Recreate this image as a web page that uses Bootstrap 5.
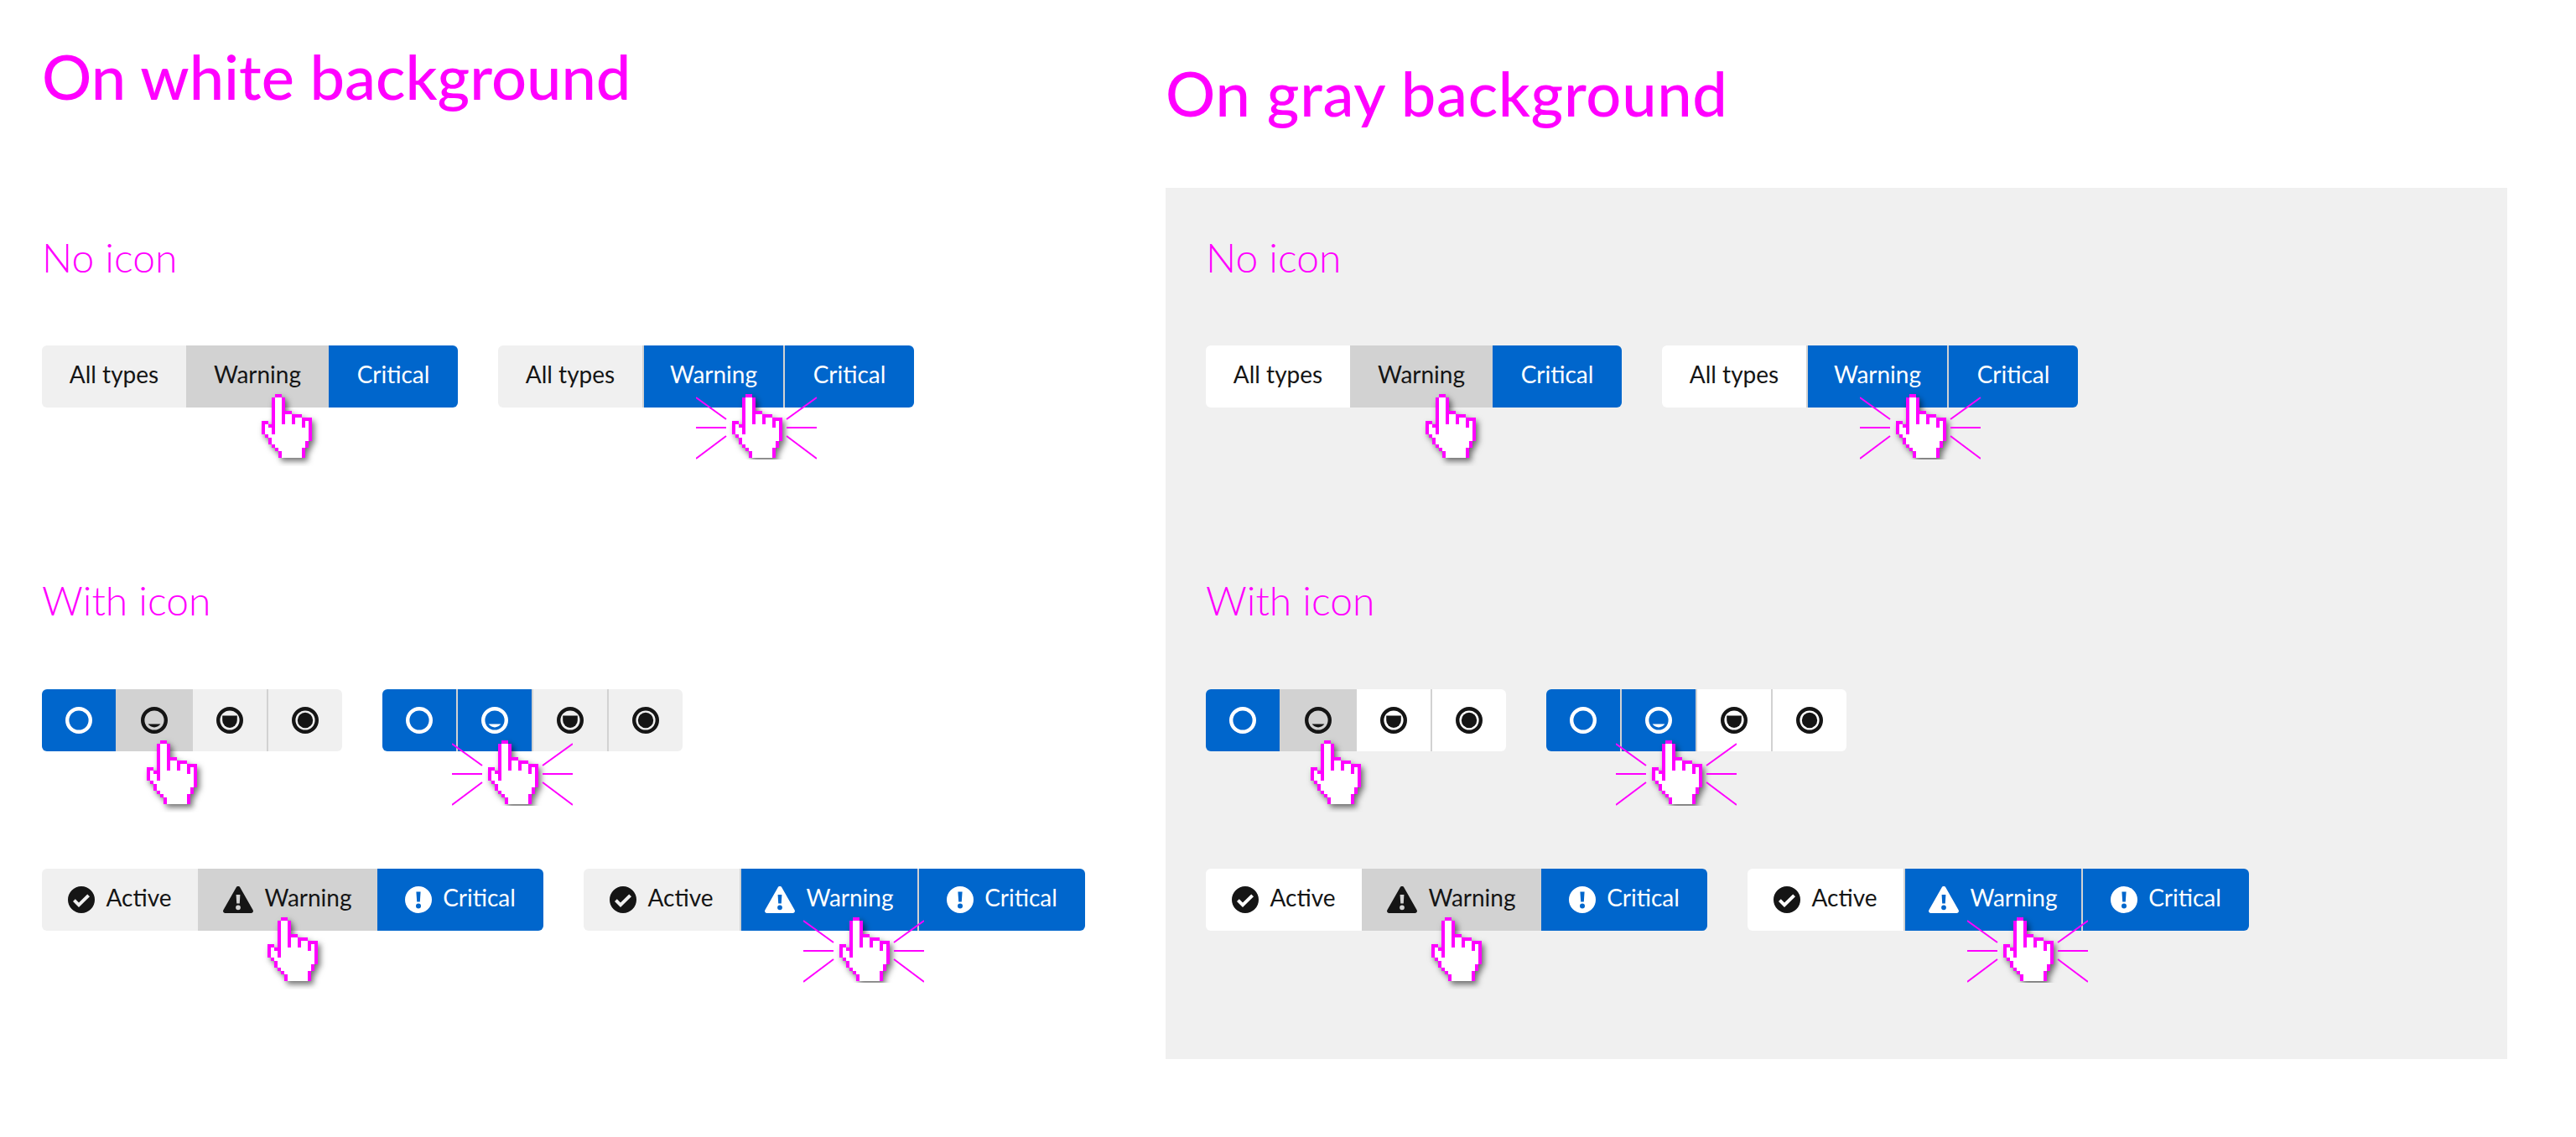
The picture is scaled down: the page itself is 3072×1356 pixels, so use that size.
<!DOCTYPE html>
<html lang="en">
<head>
<meta charset="utf-8">
<title>Toggle group states</title>
<link href="https://cdn.jsdelivr.net/npm/bootstrap@5.3.0/dist/css/bootstrap.min.css" rel="stylesheet">
<style>
html,body{background:#fff;}
body{font-family:"Lato","Liberation Sans",sans-serif;color:#151515;min-height:1356px;--seg-bg:#f0f0f0;}
.svg-defs{position:absolute;width:0;height:0;}
.col-left{width:1390px;padding-left:50px;}
.col-right{width:1600px;}
.head-left{height:224px;padding-top:48px;}
.head-right{height:224px;padding-top:68px;}
.big-title{font-size:74px;line-height:86px;font-weight:500;color:#f0f;margin:0;}
.head-right .big-title{letter-spacing:.7px;}
.pane{padding-top:54px;}
.pane-gray{background:#f0f0f0;height:1039px;padding-left:48px;--seg-bg:#fff;}
.sub-title{font-size:48px;line-height:58px;font-weight:300;color:#f0f;margin:0;}
.gap-a{margin-top:76px;}
.gap-b{margin-top:201px;}
.gap-c{margin-top:77px;}
.gap-d{margin-top:140px;}
.gap-48{gap:48px;}
.seg-wrap{position:relative;height:74px;}
.btn-group>.btn.seg.seg.seg{--bs-btn-border-radius:6px;height:74px;padding:0 0 6px;border:0;margin-left:0;flex:none;
  background:var(--seg-bg);color:#151515;font-size:28px;line-height:1;gap:13px;
  display:inline-flex;align-items:center;justify-content:center;}
.btn-group>.btn.seg.seg.seg svg{position:relative;top:3px;}
.btn-group>.btn.seg.seg.seg.is-hover{background:#d2d2d2;}
.btn-group>.btn.seg.seg.seg.is-on{background:#06c;color:#fff;}
.btn-group>.btn.seg.seg.seg.sep{border-left:2px solid #d2d2d2;}
.w-88{width:88px}.w-90{width:90px}.w-92{width:92px}
.w-154{width:154px}.w-156{width:156px}.w-168{width:168px}.w-170{width:170px}.w-172{width:172px}
.w-186{width:186px}.w-198{width:198px}.w-200{width:200px}.w-212{width:212px}.w-214{width:214px}
.ico-lvl{width:32px;height:32px;}
.ico-st{width:32px;height:32px;flex:none;}
.ico-tri{width:36px;height:32px;flex:none;}
.cursor{position:absolute;width:144px;pointer-events:none;z-index:3;}
.cursor-hover{height:90px;}
.cursor-click{height:82px;}
.cur-a{left:219px;top:54px}
.cur-b{left:236px;top:54px}
.cur-c{left:82px;top:57px}
.cur-d{left:83px;top:57px}
.cur-e{left:226px;top:54px}
.cur-f{left:262px;top:54px}
</style>
</head>
<body>
<svg class="svg-defs" aria-hidden="true">
  <defs>
    <filter id="handShade" x="-30%" y="-20%" width="170%" height="150%">
      <feDropShadow dx="3" dy="4" stdDeviation="3.5" flood-color="#000" flood-opacity=".55"/>
    </filter>
    <g id="handArt">
      <g filter="url(#handShade)">
        <polygon fill="#fff" points="16,0 24,0 24,4 28,4 28,20 36,20 36,24 48,24 48,28 60,28 60,56 56,56 56,64 52,64 52,76 20,76 20,68 16,68 16,64 12,64 12,60 8,60 8,52 4,52 4,48 0,48 0,32 8,32 8,36 12,36 12,4 16,4"/>
      </g>
      <path fill="#f0f" shape-rendering="crispEdges" d="M16 0h8v4h-8zM12 4h4v44h-4zM24 4h4v32h-4zM28 20h8v4h-8zM36 24h4v12h-4zM40 24h8v4h-8zM48 28h4v12h-4zM52 28h8v4h-8zM56 32h4v24h-4zM52 56h4v8h-4zM48 64h4v12h-4zM0 32h8v4H0zM0 36h4v12H0zM8 36h4v4H8zM4 48h4v4H4zM8 52h4v8H8zM12 60h4v4h-4zM16 64h4v4h-4zM20 68h4v8h-4z"/>
    </g>
    <symbol id="handHover" viewBox="-43 -4 144 90"><use href="#handArt"/></symbol>
    <symbol id="handClick" viewBox="-43 -4 144 82">
      <use href="#handArt"/>
      <path fill="none" stroke="#f0f" stroke-width="2" d="M-43 4L-7 30M-43 40H-7M-43 77L-7 50M101 4L65 30M101 40H65M101 77L65 50"/>
    </symbol>
    <symbol id="lvl0" viewBox="0 0 32 32"><circle cx="16" cy="16" r="13.8" fill="none" stroke="currentColor" stroke-width="4.4"/></symbol>
    <symbol id="lvl1" viewBox="0 0 32 32"><circle cx="16" cy="16" r="13.8" fill="none" stroke="currentColor" stroke-width="4.4"/><path fill="currentColor" d="M8.6 20.5H23.4A9 9 0 0 1 8.6 20.5Z"/></symbol>
    <symbol id="lvl2" viewBox="0 0 32 32"><circle cx="16" cy="16" r="13.8" fill="none" stroke="currentColor" stroke-width="4.4"/><path fill="currentColor" d="M7.2 10.5H24.8V16A8.8 9 0 0 1 7.2 16Z"/></symbol>
    <symbol id="lvl3" viewBox="0 0 32 32"><circle cx="16" cy="16" r="13.8" fill="none" stroke="currentColor" stroke-width="4.4"/><circle cx="16" cy="16" r="9.2" fill="currentColor"/></symbol>
    <symbol id="stCheck" viewBox="0 0 32 32"><path fill="currentColor" fill-rule="evenodd" d="M16 0A16 16 0 1 1 16 32A16 16 0 1 1 16 0ZM13 25L26 12.2L23.2 9.4L13 19.4L8.8 15.2L6 18Z"/></symbol>
    <symbol id="stExcl" viewBox="0 0 32 32"><path fill="currentColor" fill-rule="evenodd" d="M16 0A16 16 0 1 1 16 32A16 16 0 1 1 16 0ZM13.4 6.5L14.2 18.5H17.8L18.6 6.5ZM16 20.6A3 3 0 1 0 16 26.6A3 3 0 1 0 16 20.6Z"/></symbol>
    <symbol id="stWarn" viewBox="0 0 36 32"><path fill="currentColor" fill-rule="evenodd" d="M18 0C19 0 19.9 .5 20.4 1.4L35.6 28.2C36.6 30 35.4 32 33.4 32H2.6C.6 32 -.6 30 .4 28.2L15.6 1.4C16.1 .5 17 0 18 0ZM15.6 10L16.2 20.5H19.8L20.4 10ZM18 22.4A2.9 2.9 0 1 0 18 28.2A2.9 2.9 0 1 0 18 22.4Z"/></symbol>
  </defs>
</svg>

<main class="d-flex align-items-start">
  <section class="col-left">
    <div class="head-left"><h1 class="big-title">On white background</h1></div>
    <div class="pane">
      <h2 class="sub-title">No icon</h2>
      <div class="d-flex gap-48 gap-a">
        <div class="seg-wrap">
          <div class="btn-group" role="group">
            <button type="button" class="btn seg w-172">All types</button>
            <button type="button" class="btn seg w-170 is-hover">Warning</button>
            <button type="button" class="btn seg w-154 is-on">Critical</button>
          </div>
          <svg class="cursor cursor-hover cur-a"><use href="#handHover"/></svg>
        </div>
        <div class="seg-wrap">
          <div class="btn-group" role="group">
            <button type="button" class="btn seg w-172">All types</button>
            <button type="button" class="btn seg w-168 is-on sep">Warning</button>
            <button type="button" class="btn seg w-156 is-on sep">Critical</button>
          </div>
          <svg class="cursor cursor-click cur-b"><use href="#handClick"/></svg>
        </div>
      </div>
      <h2 class="sub-title gap-b">With icon</h2>
      <div class="d-flex gap-48 gap-c">
        <div class="seg-wrap">
          <div class="btn-group" role="group">
            <button type="button" class="btn seg w-88 is-on" aria-label="None"><svg class="ico-lvl"><use href="#lvl0"/></svg></button>
            <button type="button" class="btn seg w-92 is-hover" aria-label="Low"><svg class="ico-lvl"><use href="#lvl1"/></svg></button>
            <button type="button" class="btn seg w-88" aria-label="Medium"><svg class="ico-lvl"><use href="#lvl2"/></svg></button>
            <button type="button" class="btn seg w-90 sep" aria-label="High"><svg class="ico-lvl"><use href="#lvl3"/></svg></button>
          </div>
          <svg class="cursor cursor-hover cur-c"><use href="#handHover"/></svg>
        </div>
        <div class="seg-wrap">
          <div class="btn-group" role="group">
            <button type="button" class="btn seg w-88 is-on" aria-label="None"><svg class="ico-lvl"><use href="#lvl0"/></svg></button>
            <button type="button" class="btn seg w-90 is-on sep" aria-label="Low"><svg class="ico-lvl"><use href="#lvl1"/></svg></button>
            <button type="button" class="btn seg w-90 sep" aria-label="Medium"><svg class="ico-lvl"><use href="#lvl2"/></svg></button>
            <button type="button" class="btn seg w-90 sep" aria-label="High"><svg class="ico-lvl"><use href="#lvl3"/></svg></button>
          </div>
          <svg class="cursor cursor-click cur-d"><use href="#handClick"/></svg>
        </div>
      </div>
      <div class="d-flex gap-48 gap-d">
        <div class="seg-wrap">
          <div class="btn-group" role="group">
            <button type="button" class="btn seg w-186"><svg class="ico-st"><use href="#stCheck"/></svg>Active</button>
            <button type="button" class="btn seg w-214 is-hover"><svg class="ico-tri"><use href="#stWarn"/></svg>Warning</button>
            <button type="button" class="btn seg w-198 is-on"><svg class="ico-st"><use href="#stExcl"/></svg>Critical</button>
          </div>
          <svg class="cursor cursor-hover cur-e"><use href="#handHover"/></svg>
        </div>
        <div class="seg-wrap">
          <div class="btn-group" role="group">
            <button type="button" class="btn seg w-186"><svg class="ico-st"><use href="#stCheck"/></svg>Active</button>
            <button type="button" class="btn seg w-212 is-on sep"><svg class="ico-tri"><use href="#stWarn"/></svg>Warning</button>
            <button type="button" class="btn seg w-200 is-on sep"><svg class="ico-st"><use href="#stExcl"/></svg>Critical</button>
          </div>
          <svg class="cursor cursor-click cur-f"><use href="#handClick"/></svg>
        </div>
      </div>
    </div>
  </section>

  <section class="col-right">
    <div class="head-right"><h1 class="big-title">On gray background</h1></div>
    <div class="pane pane-gray">
      <h2 class="sub-title">No icon</h2>
      <div class="d-flex gap-48 gap-a">
        <div class="seg-wrap">
          <div class="btn-group" role="group">
            <button type="button" class="btn seg w-172">All types</button>
            <button type="button" class="btn seg w-170 is-hover">Warning</button>
            <button type="button" class="btn seg w-154 is-on">Critical</button>
          </div>
          <svg class="cursor cursor-hover cur-a"><use href="#handHover"/></svg>
        </div>
        <div class="seg-wrap">
          <div class="btn-group" role="group">
            <button type="button" class="btn seg w-172">All types</button>
            <button type="button" class="btn seg w-168 is-on sep">Warning</button>
            <button type="button" class="btn seg w-156 is-on sep">Critical</button>
          </div>
          <svg class="cursor cursor-click cur-b"><use href="#handClick"/></svg>
        </div>
      </div>
      <h2 class="sub-title gap-b">With icon</h2>
      <div class="d-flex gap-48 gap-c">
        <div class="seg-wrap">
          <div class="btn-group" role="group">
            <button type="button" class="btn seg w-88 is-on" aria-label="None"><svg class="ico-lvl"><use href="#lvl0"/></svg></button>
            <button type="button" class="btn seg w-92 is-hover" aria-label="Low"><svg class="ico-lvl"><use href="#lvl1"/></svg></button>
            <button type="button" class="btn seg w-88" aria-label="Medium"><svg class="ico-lvl"><use href="#lvl2"/></svg></button>
            <button type="button" class="btn seg w-90 sep" aria-label="High"><svg class="ico-lvl"><use href="#lvl3"/></svg></button>
          </div>
          <svg class="cursor cursor-hover cur-c"><use href="#handHover"/></svg>
        </div>
        <div class="seg-wrap">
          <div class="btn-group" role="group">
            <button type="button" class="btn seg w-88 is-on" aria-label="None"><svg class="ico-lvl"><use href="#lvl0"/></svg></button>
            <button type="button" class="btn seg w-90 is-on sep" aria-label="Low"><svg class="ico-lvl"><use href="#lvl1"/></svg></button>
            <button type="button" class="btn seg w-90 sep" aria-label="Medium"><svg class="ico-lvl"><use href="#lvl2"/></svg></button>
            <button type="button" class="btn seg w-90 sep" aria-label="High"><svg class="ico-lvl"><use href="#lvl3"/></svg></button>
          </div>
          <svg class="cursor cursor-click cur-d"><use href="#handClick"/></svg>
        </div>
      </div>
      <div class="d-flex gap-48 gap-d">
        <div class="seg-wrap">
          <div class="btn-group" role="group">
            <button type="button" class="btn seg w-186"><svg class="ico-st"><use href="#stCheck"/></svg>Active</button>
            <button type="button" class="btn seg w-214 is-hover"><svg class="ico-tri"><use href="#stWarn"/></svg>Warning</button>
            <button type="button" class="btn seg w-198 is-on"><svg class="ico-st"><use href="#stExcl"/></svg>Critical</button>
          </div>
          <svg class="cursor cursor-hover cur-e"><use href="#handHover"/></svg>
        </div>
        <div class="seg-wrap">
          <div class="btn-group" role="group">
            <button type="button" class="btn seg w-186"><svg class="ico-st"><use href="#stCheck"/></svg>Active</button>
            <button type="button" class="btn seg w-212 is-on sep"><svg class="ico-tri"><use href="#stWarn"/></svg>Warning</button>
            <button type="button" class="btn seg w-200 is-on sep"><svg class="ico-st"><use href="#stExcl"/></svg>Critical</button>
          </div>
          <svg class="cursor cursor-click cur-f"><use href="#handClick"/></svg>
        </div>
      </div>
    </div>
  </section>
</main>
<script src="https://cdn.jsdelivr.net/npm/bootstrap@5.3.0/dist/js/bootstrap.bundle.min.js"></script>
</body>
</html>
